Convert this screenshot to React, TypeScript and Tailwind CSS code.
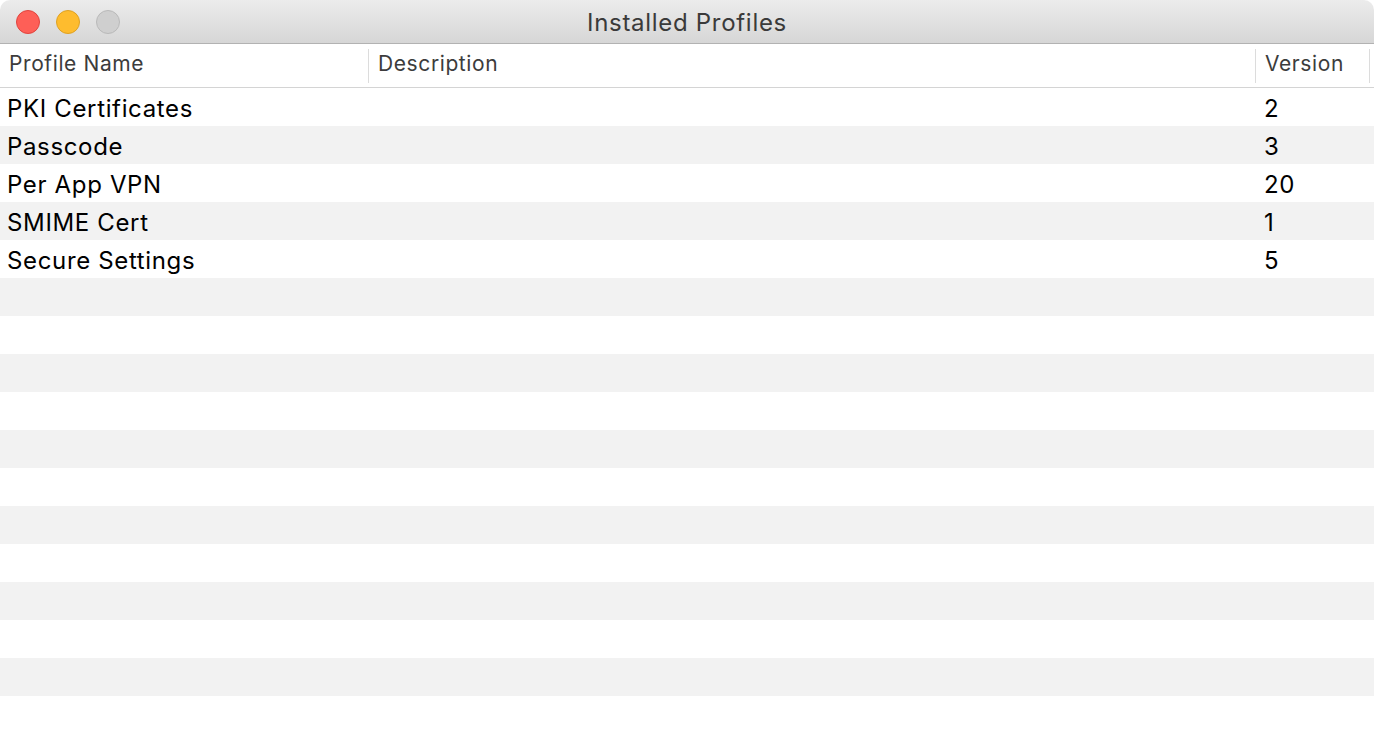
const profiles = [
  { name: "PKI Certificates", description: "", version: "2" },
  { name: "Passcode", description: "", version: "3" },
  { name: "Per App VPN", description: "", version: "20" },
  { name: "SMIME Cert", description: "", version: "1" },
  { name: "Secure Settings", description: "", version: "5" },
];

const TOTAL_ROWS = 17;

function TrafficLights() {
  return (
    <div className="flex items-center gap-[16px] pl-[16px]">
      <span className="h-[24px] w-[24px] rounded-full border border-[#e0443e] bg-[#fe5f57]" />
      <span className="h-[24px] w-[24px] rounded-full border border-[#dea123] bg-[#febc2e]" />
      <span className="h-[24px] w-[24px] rounded-full border border-[#b9b9b9] bg-[#cfcfcf]" />
    </div>
  );
}

export default function App() {
  const rows = Array.from({ length: TOTAL_ROWS }, (_, i) => profiles[i]);

  return (
    <div className="flex h-[734px] w-[1374px] flex-col overflow-hidden rounded-t-[10px] bg-white font-['Inter',sans-serif]">
      <div className="relative flex h-[44px] shrink-0 items-center border-b border-[#b2b2b2] bg-gradient-to-b from-[#ececec] to-[#d6d6d6]">
        <TrafficLights />
        <div className="absolute inset-0 flex items-center justify-center pt-[2px] text-[24px] tracking-[0.7px] text-[#3a3a3a]">
          Installed Profiles
        </div>
      </div>

      <div className="flex h-[44px] shrink-0 items-center border-b border-[#d4d4d4] text-[21px] tracking-[0.6px] text-[#3c3c3c]">
        <div className="flex h-full w-[368px] items-center pb-[3px] pl-[9px]">Profile Name</div>
        <div className="h-[34px] w-px bg-[#dcdcdc]" />
        <div className="flex h-full flex-1 items-center pb-[3px] pl-[9px]">Description</div>
        <div className="h-[34px] w-px bg-[#dcdcdc]" />
        <div className="flex h-full w-[113px] items-center pb-[3px] pl-[9px]">Version</div>
        <div className="h-[34px] w-px bg-[#dcdcdc]" />
        <div className="w-[4px]" />
      </div>

      <div className="flex flex-col text-[24px] tracking-[0.65px] text-black">
        {rows.map((p, i) => (
          <div
            key={i}
            className={`flex h-[38px] shrink-0 items-center pt-[4px] ${i % 2 === 1 ? "bg-[#f2f2f2]" : "bg-white"}`}
          >
            <div className="w-[369px] pl-[7px]">{p?.name}</div>
            <div className="flex-1">{p?.description}</div>
            <div className="w-[118px] pl-[8px]">{p?.version}</div>
          </div>
        ))}
      </div>
    </div>
  );
}
